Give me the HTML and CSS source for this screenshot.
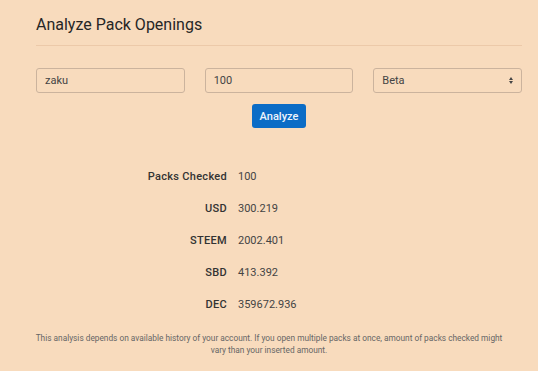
FILE: index.html
```html
<!DOCTYPE html>
<html lang="en">
<head>
    <meta charset="UTF-8">
    <title>Analyze Pack Openings</title>
    <link rel="stylesheet" href="styles.css">
</head>
<body>

    <!-- Header -->
    <div class="panel">
        <h2 class="panel-title">Analyze Pack Openings</h2>

        <!-- Form -->
        <form class="analyze-form">
            <div class="form-row">
                <input type="text" class="field" value="zaku">
                <input type="text" class="field" value="100">
                <div class="select-wrap">
                    <select class="field">
                        <option>Beta</option>
                        <option>Alpha</option>
                        <option>Untamed</option>
                    </select>
                </div>
            </div>
            <div class="form-actions">
                <button type="button" class="btn">Analyze</button>
            </div>
        </form>

        <!-- Results -->
        <dl class="results">
            <dt>Packs Checked</dt><dd>100</dd>
            <dt>USD</dt><dd>300.219</dd>
            <dt>STEEM</dt><dd>2002.401</dd>
            <dt>SBD</dt><dd>413.392</dd>
            <dt>DEC</dt><dd>359672.936</dd>
        </dl>

        <p class="note">This analysis depends on available history of your account. If you open multiple packs at once, amount of packs checked might vary than your inserted amount.</p>
    </div>

</body>
</html>
```

FILE: styles.css
```css
/* General Reset */
* {
    margin: 0;
    padding: 0;
    box-sizing: border-box;
}

body {
    background: #f8dbbd;
    color: #333;
    font-family: 'Roboto', sans-serif;
}

.panel {
    padding: 14px 16px 0 36px;
    width: 538px;
}

.panel-title {
    font-size: 16px;
    font-weight: 400;
    color: #262626;
    line-height: 22px;
    padding-bottom: 9px;
    border-bottom: 1px solid #ecc9a9;
}

/* Form */
.analyze-form {
    margin-top: 22px;
}

.form-row {
    display: grid;
    grid-template-columns: repeat(3, 1fr);
    column-gap: 20px;
}

.field {
    width: 100%;
    height: 25px;
    background: transparent;
    border: 1px solid #cbb39d;
    border-radius: 3px;
    padding: 0 8px;
    font-family: 'Roboto', sans-serif;
    font-size: 11px;
    color: #444;
    outline: none;
}

.select-wrap {
    position: relative;
}

.select-wrap select {
    appearance: none;
    -webkit-appearance: none;
}

/* up / down arrows of the select */
.select-wrap::after {
    content: '';
    position: absolute;
    right: 9px;
    top: 9px;
    border-left: 2.5px solid transparent;
    border-right: 2.5px solid transparent;
    border-bottom: 3px solid #444;
}

.select-wrap::before {
    content: '';
    position: absolute;
    right: 9px;
    top: 13px;
    border-left: 2.5px solid transparent;
    border-right: 2.5px solid transparent;
    border-top: 3px solid #444;
}

.form-actions {
    display: flex;
    justify-content: center;
    margin-top: 11px;
}

.btn {
    background: #0b6cc6;
    color: #eef4fb;
    border: none;
    border-radius: 3px;
    width: 54px;
    height: 24px;
    font-family: 'Roboto', sans-serif;
    font-size: 11px;
    font-weight: 500;
}

/* Results */
.results {
    display: grid;
    grid-template-columns: 191px 1fr;
    column-gap: 11px;
    row-gap: 18px;
    margin-top: 42px;
    font-size: 11px;
    line-height: 14px;
}

.results dt {
    text-align: right;
    font-weight: 500;
    color: #333;
    letter-spacing: 0.3px;
}

.results dd {
    color: #444;
}

.note {
    margin: 20px 0 0 -36px;
    width: 538px;
    padding: 0 32px;
    text-align: center;
    font-size: 8.3px;
    line-height: 12px;
    color: #666;
}
```
